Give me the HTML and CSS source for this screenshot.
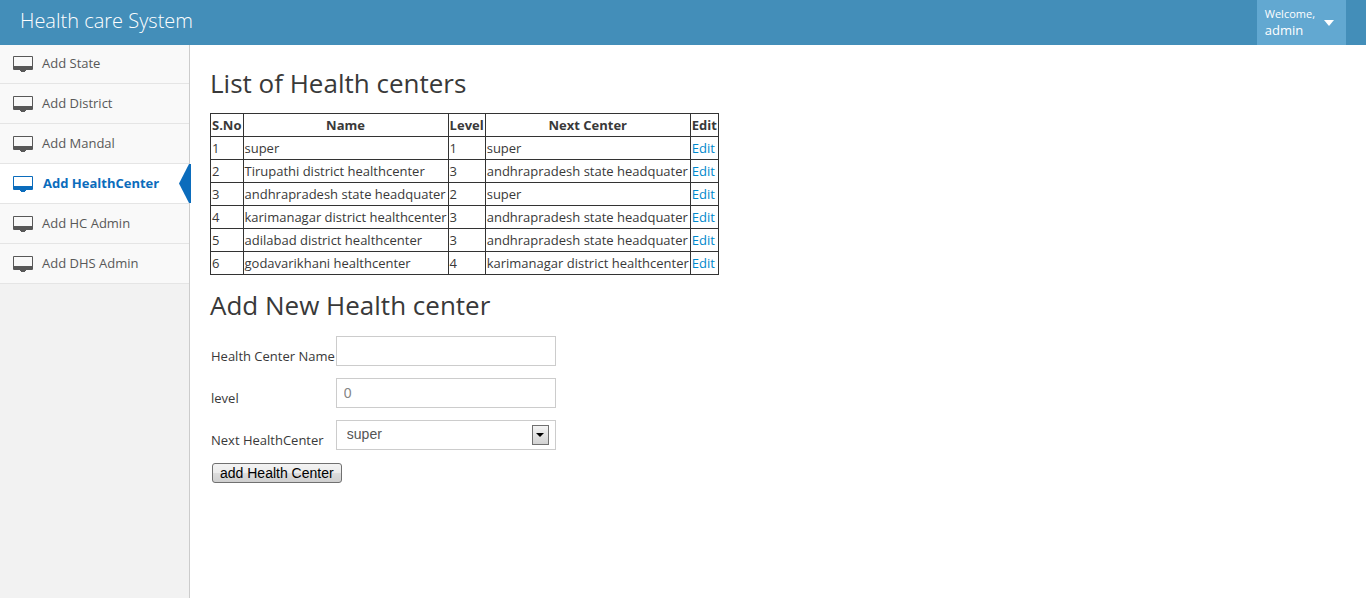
FILE: index.html
```html
<!DOCTYPE html>
<html lang="en">
<head>
<meta charset="utf-8">
<title>Health care System</title>
<link rel="stylesheet" href="styles.css">
</head>
<body>
<svg class="defs" aria-hidden="true">
  <symbol id="desktop" viewBox="0 0 20 16">
    <path fill="currentColor" fill-rule="evenodd" d="M1 0h18q1 0 1 1v12q0 1-1 1h-6v1h-1v1H8v-1H7v-1H1q-1 0-1-1V1q0-1 1-1zM1 1v9h18V1z"/>
  </symbol>
</svg>
<header class="navbar">
  <a class="brand" href="#">Health care System</a>
  <button class="user" type="button">
    <span class="user-info"><small>Welcome,</small>admin</span>
    <svg class="caret" viewBox="0 0 10 6" aria-hidden="true"><path fill="currentColor" d="M0 0h10L5 6z"/></svg>
  </button>
</header>
<div class="layout">
  <nav class="sidebar">
    <ul class="menu">
      <li><a href="#"><svg class="icon"><use href="#desktop"/></svg><span>Add State</span></a></li>
      <li><a href="#"><svg class="icon"><use href="#desktop"/></svg><span>Add District</span></a></li>
      <li><a href="#"><svg class="icon"><use href="#desktop"/></svg><span>Add Mandal</span></a></li>
      <li class="active"><a href="#"><svg class="icon"><use href="#desktop"/></svg><span>Add HealthCenter</span></a></li>
      <li><a href="#"><svg class="icon"><use href="#desktop"/></svg><span>Add HC Admin</span></a></li>
      <li><a href="#"><svg class="icon"><use href="#desktop"/></svg><span>Add DHS Admin</span></a></li>
    </ul>
  </nav>
  <main class="content">
    <h2>List of Health centers</h2>
    <table class="centers">
      <thead>
        <tr><th>S.No</th><th>Name</th><th>Level</th><th>Next Center</th><th>Edit</th></tr>
      </thead>
      <tbody>
        <tr><td>1</td><td>super</td><td>1</td><td>super</td><td><a href="#">Edit</a></td></tr>
        <tr><td>2</td><td>Tirupathi district healthcenter</td><td>3</td><td>andhrapradesh state headquater</td><td><a href="#">Edit</a></td></tr>
        <tr><td>3</td><td>andhrapradesh state headquater</td><td>2</td><td>super</td><td><a href="#">Edit</a></td></tr>
        <tr><td>4</td><td>karimanagar district healthcenter</td><td>3</td><td>andhrapradesh state headquater</td><td><a href="#">Edit</a></td></tr>
        <tr><td>5</td><td>adilabad district healthcenter</td><td>3</td><td>andhrapradesh state headquater</td><td><a href="#">Edit</a></td></tr>
        <tr><td>6</td><td>godavarikhani healthcenter</td><td>4</td><td>karimanagar district healthcenter</td><td><a href="#">Edit</a></td></tr>
      </tbody>
    </table>
    <h2>Add New Health center</h2>
    <form class="center-form">
      <div class="fields">
        <label for="name">Health Center Name</label>
        <input id="name" type="text">
        <label for="level">level</label>
        <input id="level" type="text" value="0">
        <label for="next">Next HealthCenter</label>
        <div class="select">
          <select id="next"><option>super</option><option>andhrapradesh state headquater</option><option>karimanagar district healthcenter</option></select>
          <span class="select-arrow"><svg viewBox="0 0 8 4" aria-hidden="true"><path d="M0 0h8L4 4z"/></svg></span>
        </div>
      </div>
      <button class="submit" type="button">add Health Center</button>
    </form>
  </main>
</div>
</body>
</html>
```

FILE: styles.css
```css
* {
  box-sizing: border-box;
}

body {
  display: flex;
  flex-direction: column;
  min-height: 100vh;
  margin: 0;
  background: #fff;
  color: #393939;
  font: 13px/20px "Open Sans", sans-serif;
}

a {
  color: #08c;
  text-decoration: none;
}

.defs {
  position: absolute;
  width: 0;
  height: 0;
}

.navbar {
  display: flex;
  justify-content: space-between;
  height: 45px;
  padding: 0 20px;
  background: #438eb9;
}

.brand {
  padding-top: 11px;
  color: #fff;
  font-size: 20px;
  font-weight: 300;
}

.user {
  display: flex;
  align-items: center;
  gap: 9px;
  padding: 0 12px 0 8px;
  border: 0;
  background: #62a8d1;
  color: #fff;
  font: 13px/16px "Open Sans", sans-serif;
  text-align: left;
}

.user-info {
  padding-bottom: 2px;
}

.user small {
  display: block;
  font-size: 11px;
}

.caret {
  width: 10px;
  height: 6px;
}

.layout {
  display: flex;
  flex: 1;
}

.sidebar {
  flex: none;
  width: 190px;
  border-right: 1px solid #ccc;
  background: #f2f2f2;
}

.menu {
  margin: 0;
  padding: 0;
  list-style: none;
}

.menu li {
  position: relative;
  border-bottom: 1px solid #e5e5e5;
  background: #f9f9f9;
}

.menu a {
  display: flex;
  align-items: center;
  gap: 9px;
  padding: 9px 0 10px 13px;
  color: #585858;
}

.menu li:first-child a {
  padding-top: 8px;
}

.icon {
  width: 20px;
  height: 16px;
  margin-top: 2px;
}

.menu .active {
  background: #fff;
}

.menu .active a {
  gap: 10px;
  color: #0b6cbc;
  font-weight: 700;
}

.active::before {
  content: "";
  position: absolute;
  top: 0;
  right: -2px;
  width: 12px;
  height: 39px;
  background: #0b6cbc;
  clip-path: polygon(0 50%, 10px 0, 100% 0, 100% 100%, 10px 100%);
}

.content {
  flex: 1;
  padding: 18px 20px;
}

h2 {
  margin: 0;
  font-size: 26px;
  font-weight: 400;
  line-height: 40px;
}

.centers {
  margin: 10px 0;
  border-collapse: collapse;
}

.centers th,
.centers td {
  padding: 1px;
  border: 1px solid #333;
}

.center-form {
  padding: 11px 1px 0;
}

.fields {
  display: grid;
  grid-template-columns: max-content 220px;
  gap: 12px 1px;
}

.fields label {
  align-self: end;
}

.fields input,
.fields select {
  width: 100%;
  height: 30px;
  padding: 4px 7px;
  border: 1px solid #ccc;
  border-radius: 0;
  background: #fff;
  color: #858585;
  font: 14px/20px "Liberation Sans", Arial, sans-serif;
}

.select {
  position: relative;
  height: 30px;
}

.fields select {
  appearance: none;
  padding: 3px 10px 5px;
  color: #555;
}

.select-arrow {
  position: absolute;
  top: 5px;
  right: 7px;
  display: flex;
  align-items: center;
  justify-content: center;
  width: 17px;
  height: 20px;
  border: 1px solid #707070;
  background: linear-gradient(#f4f4f4, #d2d2d2);
  pointer-events: none;
}

.select-arrow svg {
  width: 8px;
  height: 4px;
}

.submit {
  margin: 13px 1px 0;
  padding: 0 7px;
  border: 1px solid #707070;
  border-radius: 3px;
  background: linear-gradient(#f3f3f3 0%, #ebebeb 50%, #dddddd 50%, #cfcfcf 100%);
  color: #000;
  font: 14px/18px "Liberation Sans", Arial, sans-serif;
}
```
